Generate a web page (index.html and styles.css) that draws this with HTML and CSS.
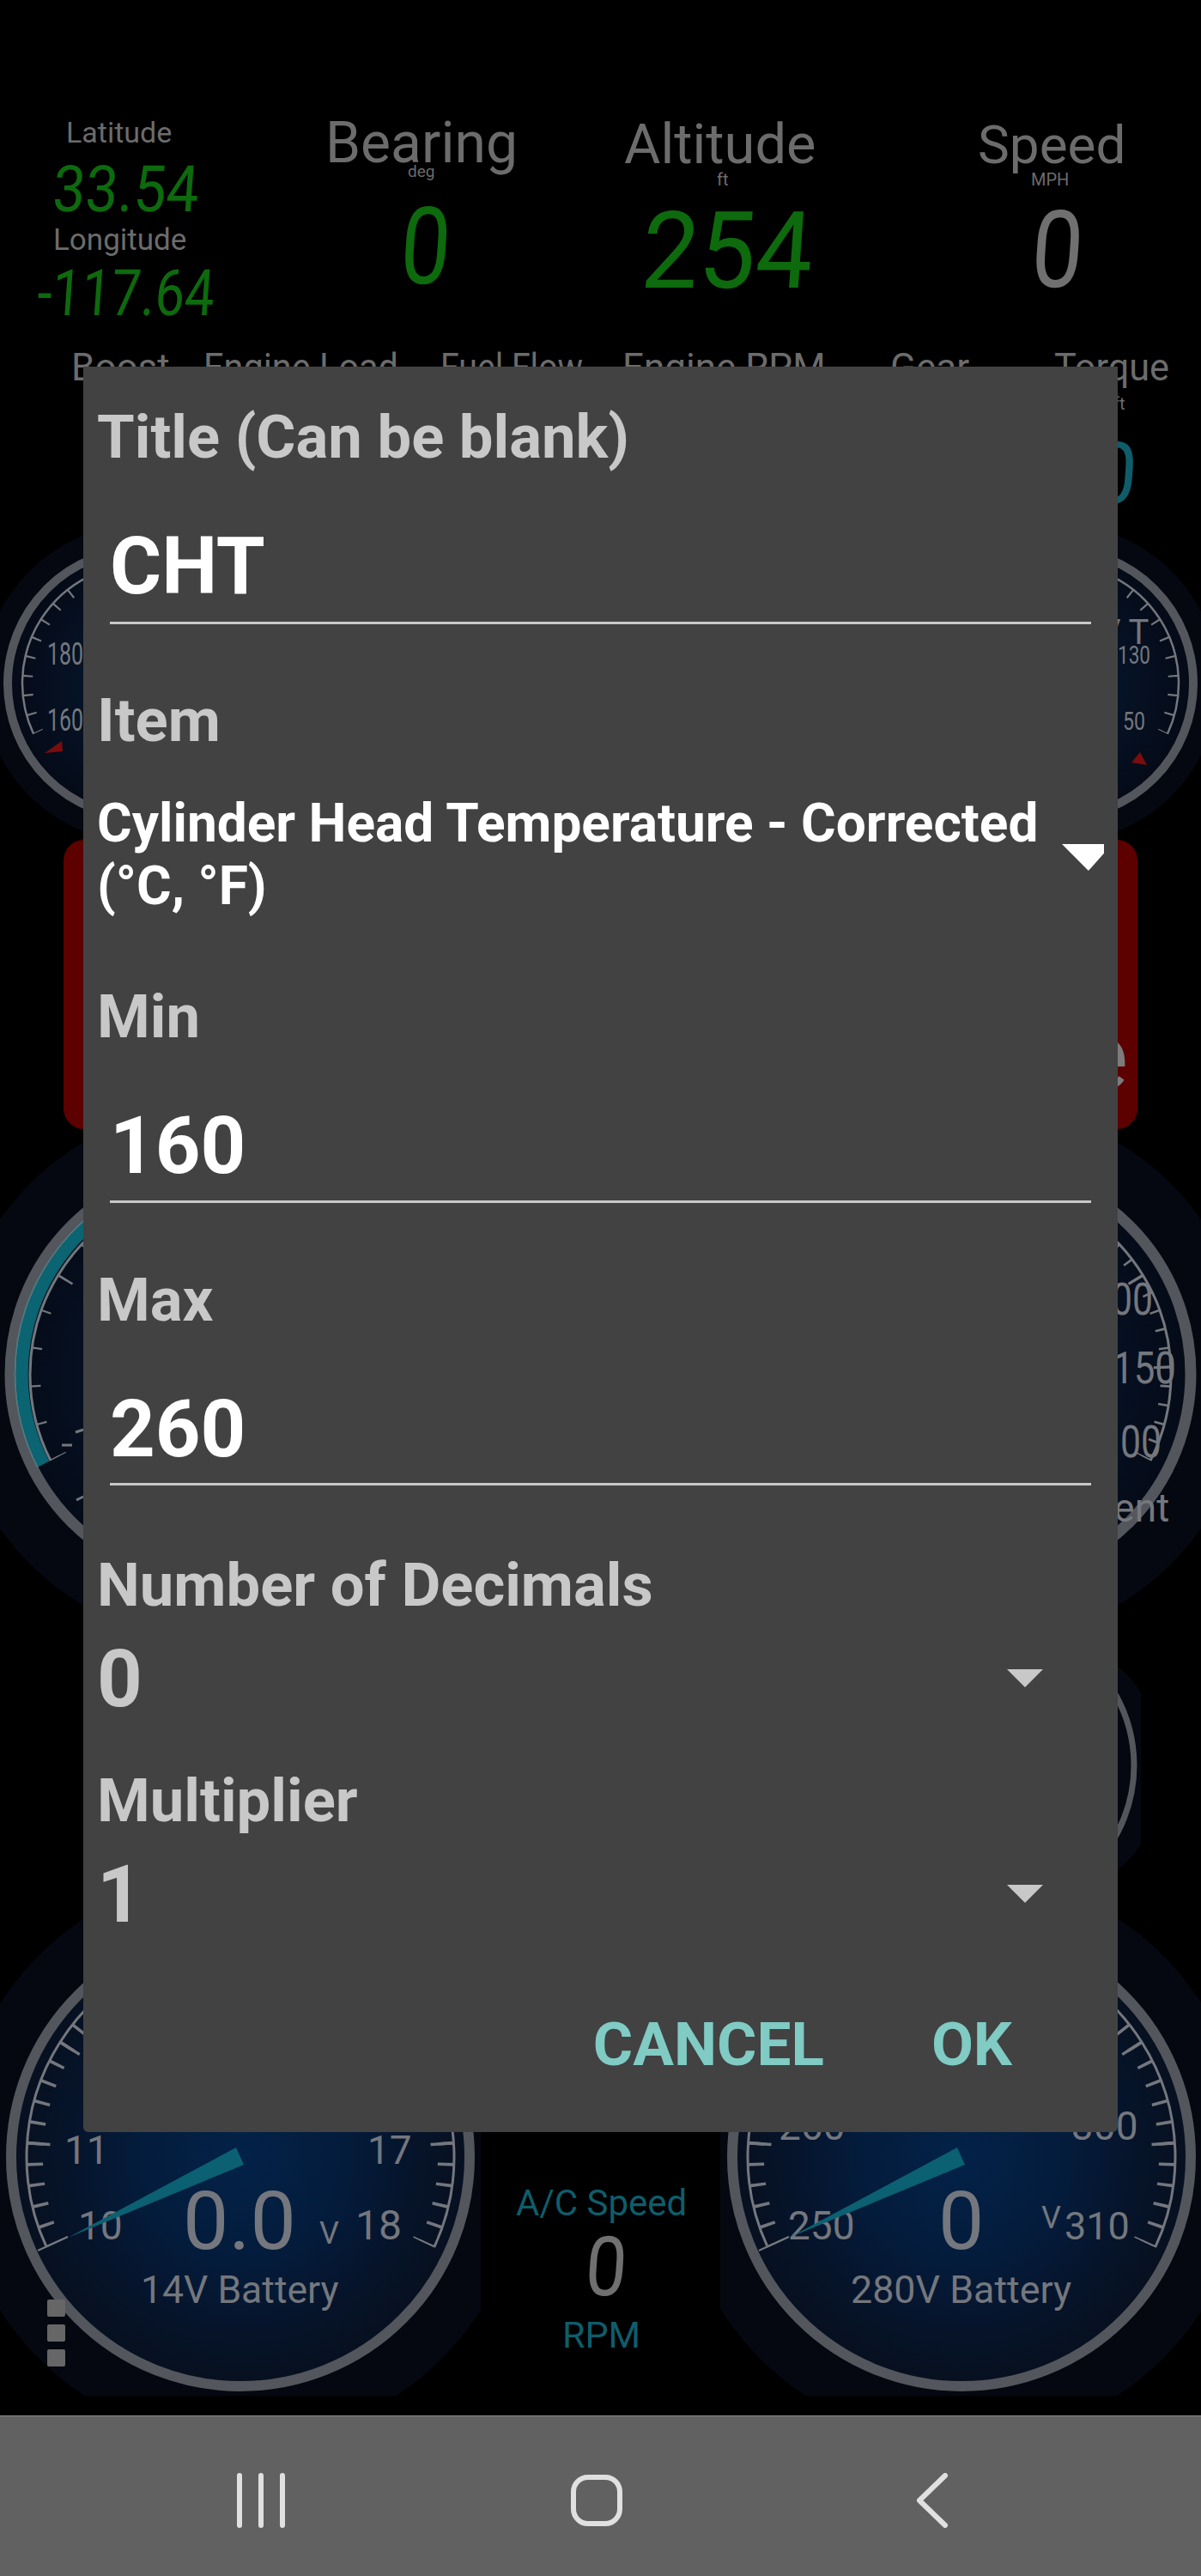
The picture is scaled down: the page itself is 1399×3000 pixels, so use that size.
FILE: index.html
```html
<!DOCTYPE html>
<html lang="en">
<head>
	<meta charset="UTF-8">
	<title>Gauge settings</title>
	<link rel="stylesheet" href="styles.css">
</head>
<body>
<div class="screen">
	<svg class="dash" width="1399" height="2813" viewBox="0 0 1399 2813">
		<defs>
			<radialGradient id="navy" cx="50%" cy="50%" r="50%">
				<stop offset="0" stop-color="#032248"/>
				<stop offset="0.45" stop-color="#041c3c"/>
				<stop offset="0.75" stop-color="#06142b"/>
				<stop offset="1" stop-color="#07101f"/>
			</radialGradient>
			<radialGradient id="navyDark" cx="50%" cy="50%" r="50%">
				<stop offset="0" stop-color="#071a33"/>
				<stop offset="1" stop-color="#050b18"/>
			</radialGradient>
			<clipPath id="cell14"><rect x="0" y="2100" width="560" height="690"/></clipPath>
			<clipPath id="cell280"><rect x="839" y="2100" width="560" height="690"/></clipPath>
		</defs>

		<!-- top readouts -->
		<text class="t-grey" x="77" y="166" font-size="34">Latitude</text>
		<text class="t-grey" x="62" y="291" font-size="35">Longitude</text>
		<text class="t-grey" x="379" y="189" font-size="66">Bearing</text>
		<text class="t-grey" x="475" y="206" font-size="19">deg</text>
		<text class="t-grey" x="727" y="190" font-size="65">Altitude</text>
		<text class="t-grey" x="835" y="216" font-size="20">ft</text>
		<text class="t-grey" x="1139" y="190" font-size="62">Speed</text>
		<text class="t-grey" x="1201" y="216" font-size="20">MPH</text>

		<text class="lcd lcd-green" transform="translate(60 246) skewX(-4)" font-size="75" textLength="170" lengthAdjust="spacingAndGlyphs">33.54</text>
		<text class="lcd lcd-green" transform="translate(42 367) skewX(-4)" font-size="75" textLength="206" lengthAdjust="spacingAndGlyphs">-117.64</text>
		<text class="lcd lcd-green" transform="translate(464 330) skewX(-4)" font-size="125" textLength="58" lengthAdjust="spacingAndGlyphs">0</text>
		<text class="lcd lcd-green" transform="translate(745 335) skewX(-4)" font-size="125" textLength="199" lengthAdjust="spacingAndGlyphs">254</text>
		<text class="lcd lcd-grey" transform="translate(1199 334) skewX(-4)" font-size="125" textLength="60" lengthAdjust="spacingAndGlyphs">0</text>

		<text class="t-grey" x="83" y="443" font-size="44">Boost</text>
		<text class="t-grey" x="237" y="443" font-size="44" textLength="227" lengthAdjust="spacingAndGlyphs">Engine Load</text>
		<text class="t-grey" x="513" y="443" font-size="44" textLength="166" lengthAdjust="spacingAndGlyphs">Fuel Flow</text>
		<text class="t-grey" x="725" y="443" font-size="44">Engine RPM</text>
		<text class="t-grey" x="1037" y="443" font-size="44">Gear</text>
		<text class="t-grey" x="1228" y="443" font-size="44" textLength="134" lengthAdjust="spacingAndGlyphs">Torque</text>
		<text class="t-grey" x="1297" y="477" font-size="20">ft</text>
		<text class="lcd lcd-teal" transform="translate(1270 586) skewX(-4)" font-size="100" textLength="52" lengthAdjust="spacingAndGlyphs">0</text>

		<!-- upper small gauges -->
		<circle class="halo" cx="165" cy="796" r="185"/>
		<circle fill="url(#navyDark)" cx="165" cy="796" r="150"/>
		<circle class="ring" cx="165" cy="796" r="156" stroke-width="10"/>
		<g transform="translate(165 796)">
			<path class="scale" stroke-width="2.5" d="M-125.9 58.7 A139 139 0 1 1 125.9 58.7"/>
			<path class="tick" stroke-width="12" pathLength="24" stroke-dasharray=".1 .9" stroke-dashoffset=".05" d="M-120.5 56.2 A133 133 0 1 1 120.5 56.2"/>
		</g>
		<text class="t-dial" x="55" y="774" font-size="36" textLength="42" lengthAdjust="spacingAndGlyphs">180</text>
		<text class="t-dial" x="55" y="851" font-size="36" textLength="42" lengthAdjust="spacingAndGlyphs">160</text>
		<polygon class="red-mark" points="52,877 72,863 73,875"/>

		<circle class="halo" cx="1234" cy="796" r="185"/>
		<circle fill="url(#navyDark)" cx="1234" cy="796" r="150"/>
		<circle class="ring" cx="1234" cy="796" r="156" stroke-width="10"/>
		<g transform="translate(1234 796)">
			<path class="scale" stroke-width="2.5" d="M-125.9 58.7 A139 139 0 1 1 125.9 58.7"/>
			<path class="tick" stroke-width="12" pathLength="24" stroke-dasharray=".1 .9" stroke-dashoffset=".05" d="M-120.5 56.2 A133 133 0 1 1 120.5 56.2"/>
		</g>
		<text class="t-dial" x="1280" y="750" font-size="40">V T</text>
		<text class="t-dial" x="1302" y="773" font-size="30" textLength="38" lengthAdjust="spacingAndGlyphs">130</text>
		<text class="t-dial" x="1308" y="850" font-size="30" textLength="26" lengthAdjust="spacingAndGlyphs">50</text>
		<polygon class="red-mark" points="1318,888 1328,876 1336,891"/>

		<!-- warning box -->
		<rect class="warn" x="74" y="978" width="1251" height="337" rx="24"/>
		<text class="t-warn" x="1256" y="1268" font-size="110">e</text>

		<!-- middle gauges -->
		<circle class="halo" cx="256" cy="1600" r="313"/>
		<circle fill="url(#navyDark)" cx="256" cy="1600" r="240"/>
		<circle class="ring" cx="256" cy="1600" r="244" stroke-width="13"/>
		<g transform="translate(256 1600)">
			<path class="band" stroke-width="14" d="M-205 105 A230 230 0 0 1 0 -230"/>
			<path class="band-edge" stroke-width="2" d="M-212 109 A238 238 0 0 1 0 -238"/>
			<path class="scale" stroke-width="3" d="M-197 101 A221 221 0 1 1 197 101"/>
			<path class="tick" stroke-width="12" pathLength="20" stroke-dasharray=".05 .95" stroke-dashoffset=".025" d="M-191.6 98.2 A215 215 0 1 1 191.6 98.2"/>
			<path class="tick" stroke-width="20" pathLength="4" stroke-dasharray=".012 .988" stroke-dashoffset=".006" d="M-187.9 96.3 A211 211 0 1 1 187.9 96.3"/>
		</g>
		<line class="tick" x1="72" y1="1683" x2="84" y2="1683" stroke-width="3"/>
		<line class="tick" x1="88" y1="1668" x2="97" y2="1665" stroke-width="3"/>
		<line class="tick" x1="89" y1="1747" x2="97" y2="1743" stroke-width="3"/>

		<circle class="halo" cx="1143" cy="1600" r="313"/>
		<circle fill="url(#navyDark)" cx="1143" cy="1600" r="240"/>
		<circle class="ring" cx="1143" cy="1600" r="244" stroke-width="13"/>
		<g transform="translate(1143 1600)">
			<path class="scale" stroke-width="3" d="M-197 101 A221 221 0 1 1 197 101"/>
			<path class="tick" stroke-width="12" pathLength="40" stroke-dasharray=".12 .88" stroke-dashoffset=".06" d="M-191.6 98.2 A215 215 0 1 1 191.6 98.2"/>
			<path class="tick" stroke-width="20" pathLength="8" stroke-dasharray=".03 .97" stroke-dashoffset=".015" d="M-187.9 96.3 A211 211 0 1 1 187.9 96.3"/>
		</g>
		<text class="t-dial" x="1271" y="1531" font-size="52" textLength="72" lengthAdjust="spacingAndGlyphs">100</text>
		<text class="t-dial" x="1296" y="1611" font-size="52" textLength="74" lengthAdjust="spacingAndGlyphs">150</text>
		<text class="t-dial" x="1281" y="1697" font-size="52" textLength="72" lengthAdjust="spacingAndGlyphs">100</text>
		<text class="t-dial" x="1205" y="1772" font-size="46">Percent</text>

		<!-- round gauge behind the dialog -->
		<path class="halo" d="M1302 1941 Q1318 1952 1329 1972 L1329 2148 Q1318 2165 1302 2178 Z"/>
		<circle class="ring" cx="1153" cy="2056" r="168" stroke-width="7"/>

		<!-- 14V battery -->
		<circle class="halo" cx="280" cy="2512" r="332" clip-path="url(#cell14)"/>
		<circle fill="url(#navy)" cx="280" cy="2512" r="265"/>
		<circle class="ring" cx="280" cy="2512" r="267" stroke-width="12"/>
		<g transform="translate(280 2512)">
			<path class="scale" stroke-width="3" d="M-225.7 105.2 A249 249 0 1 1 225.7 105.2"/>
			<path class="tick" stroke-width="19" pathLength="40" stroke-dasharray=".15 .85" stroke-dashoffset=".075" d="M-217.1 101.2 A239.5 239.5 0 1 1 217.1 101.2"/>
			<path class="tick" stroke-width="27" pathLength="8" stroke-dasharray=".03 .97" stroke-dashoffset=".015" d="M-213.4 99.5 A235.5 235.5 0 1 1 213.4 99.5"/>
		</g>
		<text class="t-dial" x="75" y="2520" font-size="46">11</text>
		<text class="t-dial" x="428" y="2520" font-size="46">17</text>
		<text class="t-dial" x="91" y="2608" font-size="46">10</text>
		<text class="t-dial" x="414" y="2608" font-size="48">18</text>
		<polygon class="needle" points="275,2501 284,2521 79,2606"/>
		<line class="tick" x1="44" y1="2621" x2="79" y2="2605" stroke-width="2"/>
		<text class="t-dial" x="213" y="2619" font-size="95">0.0</text>
		<text class="t-dial" x="372" y="2613" font-size="36">V</text>
		<text class="t-dial" x="164" y="2682" font-size="44.5">14V Battery</text>

		<!-- 280V battery -->
		<circle class="halo" cx="1120" cy="2512" r="332" clip-path="url(#cell280)"/>
		<circle fill="url(#navy)" cx="1120" cy="2512" r="265"/>
		<circle class="ring" cx="1120" cy="2512" r="267" stroke-width="12"/>
		<g transform="translate(1120 2512)">
			<path class="scale" stroke-width="3" d="M-225.7 105.2 A249 249 0 1 1 225.7 105.2"/>
			<path class="tick" stroke-width="19" pathLength="40" stroke-dasharray=".15 .85" stroke-dashoffset=".075" d="M-217.1 101.2 A239.5 239.5 0 1 1 217.1 101.2"/>
			<path class="tick" stroke-width="27" pathLength="8" stroke-dasharray=".03 .97" stroke-dashoffset=".015" d="M-213.4 99.5 A235.5 235.5 0 1 1 213.4 99.5"/>
		</g>
		<text class="t-dial" x="907" y="2492" font-size="46">260</text>
		<text class="t-dial" x="1248" y="2492" font-size="46">300</text>
		<text class="t-dial" x="918" y="2608" font-size="46">250</text>
		<text class="t-dial" x="1240" y="2608" font-size="45">310</text>
		<polygon class="needle" points="1115,2501 1124,2521 919,2606"/>
		<line class="tick" x1="884" y1="2621" x2="919" y2="2605" stroke-width="2"/>
		<text class="t-dial" x="1093" y="2619" font-size="95">0</text>
		<text class="t-dial" x="1213" y="2595" font-size="36">V</text>
		<text class="t-dial" x="991" y="2682" font-size="44.8">280V Battery</text>

		<!-- A/C speed -->
		<text class="t-teal" x="601" y="2580" font-size="42">A/C Speed</text>
		<text class="lcd lcd-grey" transform="translate(680 2673) skewX(-4)" font-size="96" textLength="48" lengthAdjust="spacingAndGlyphs">0</text>
		<text class="t-teal" x="655" y="2734" font-size="43">RPM</text>

		<!-- overflow dots -->
		<rect class="dot" x="55" y="2678" width="21" height="20" rx="2"/>
		<rect class="dot" x="55" y="2707" width="21" height="20" rx="2"/>
		<rect class="dot" x="55" y="2736" width="21" height="20" rx="2"/>
	</svg>

	<div class="dialog">
		<div class="label">Title (Can be blank)</div>
		<div class="input input-title">CHT</div>

		<div class="label">Item</div>
		<div class="select-item">
			<span class="select-item-text">Cylinder Head Temperature - Corrected<br>(°C, °F)</span>
			<span class="arrow-item"></span>
		</div>

		<div class="label">Min</div>
		<div class="input input-min">160</div>

		<div class="label">Max</div>
		<div class="input input-max">260</div>

		<div class="label">Number of Decimals</div>
		<div class="select">
			<span>0</span>
			<span class="arrow"></span>
		</div>

		<div class="label">Multiplier</div>
		<div class="select">
			<span>1</span>
			<span class="arrow"></span>
		</div>

		<div class="actions">
			<span>CANCEL</span>
			<span>OK</span>
		</div>
	</div>
</div>

<div class="nav">
	<svg class="nav-icon" width="64" height="64" viewBox="0 0 64 64">
		<path d="M7 3V61M32 3V61M57 3V61"/>
	</svg>
	<svg class="nav-icon" width="64" height="64" viewBox="0 0 64 64">
		<rect x="5" y="5" width="54" height="54" rx="17"/>
	</svg>
	<svg class="nav-icon" width="64" height="64" viewBox="0 0 64 64">
		<path d="M47 3L17 32L47 61"/>
	</svg>
</div>
</body>
</html>
```

FILE: styles.css
```css
html, body {margin: 0; padding: 0; background: #000;}
body {width: 1399px; height: 3000px; overflow: hidden; font-family: Roboto, "Liberation Sans", sans-serif;}

.screen {position: relative; height: 2813px;}
.dash {display: block;}
.dash text {font-family: Roboto, "Liberation Sans", sans-serif;}

.t-grey {fill: #6c6c6c;}
.t-dial {fill: #74777d;}
.t-teal {fill: #0f5d6b;}
.t-warn {fill: #7c7c7c;}
.lcd {font-weight: 400;}
.lcd-green {fill: #0d6a0d;}
.lcd-grey {fill: #707070;}
.lcd-teal {fill: #0f5d6b;}

.halo {fill: #050810;}
.ring {fill: none; stroke: #53565c;}
.scale {fill: none; stroke: #74777d;}
.tick {fill: none; stroke: #74777d;}
.band {fill: none; stroke: #0a6472;}
.band-edge {fill: none; stroke: #4c7a82;}
.needle {fill: #0b6071;}
.red-mark {fill: #7a0d0d;}
.warn {fill: #5c0000;}
.dot {fill: #666;}

.dialog {position: absolute; left: 97px; top: 427px; width: 1205px; height: 2056px; box-sizing: border-box; padding: 32px 16px 0; background: #424242; border-radius: 0 0 6px 6px;}
.label {height: 100px; font-size: 70.6px; line-height: 100px; font-weight: 700; color: #c8c8c8;}
.input {height: 121px; margin: 44px 15px 64px; border-bottom: 3px solid #c8c8c8; font-size: 92px; line-height: 113px; font-weight: 700; color: #fff;}
.input-title {margin-bottom: 62px;}
.input-min {height: 120px; margin-bottom: 63px;}
.input-max {height: 119px; margin-bottom: 66px;}

.select-item {display: flex; justify-content: space-between; margin: 33px 0 66px;}
.select-item-text {font-size: 62.2px; line-height: 73px; font-weight: 700; color: #fff;}
.arrow-item {width: 49px; height: 31px; margin: 61px 0 0 0; background: #fff; clip-path: polygon(0 0, 100% 0, 100% 35%, 63% 100%);}

.select {display: flex; justify-content: space-between; align-items: center; height: 100px; margin: 10px 0 41px; font-size: 92px; line-height: 100px; font-weight: 700; color: #c8c8c8;}
.arrow {width: 0; height: 0; margin: 0 71px 4px 0; border-left: 21px solid transparent; border-right: 21px solid transparent; border-top: 21px solid #c8c8c8;}

.actions {display: flex; justify-content: flex-end; gap: 125px; margin-top: 84px; padding-right: 107px; font-size: 71px; line-height: 80px; font-weight: 700; color: #80cbc4;}

.nav {display: grid; grid-template-columns: repeat(3, 391px); justify-content: center; justify-items: center; align-items: center; box-sizing: border-box; height: 187px; padding: 10px 9px 0 0; background: #616161; border-top: 1px solid #8a8a8a;}
.nav-icon {fill: none; stroke: #e0e0e0; stroke-width: 6; stroke-linecap: round; stroke-linejoin: round;}
```
